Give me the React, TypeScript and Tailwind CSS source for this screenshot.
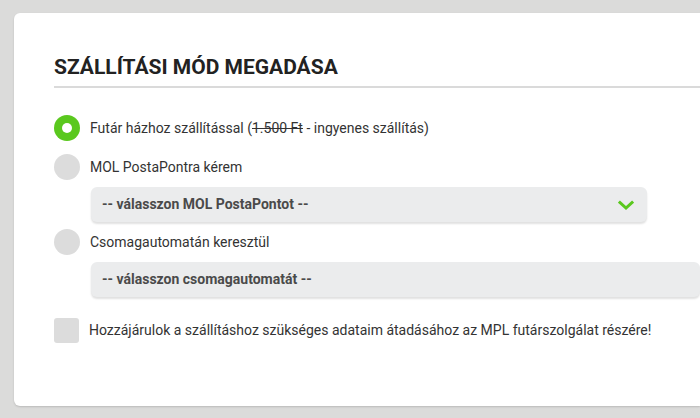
import { useState } from 'react';

const options = [
  { id: 'mol', label: 'MOL PostaPontra kérem', select: '-- válasszon MOL PostaPontot --', check: true },
  { id: 'automata', label: 'Csomagautomatán keresztül', select: '-- válasszon csomagautomatát --' },
];

function Radio({ checked, onClick }: { checked: boolean; onClick: () => void }) {
  return (
    <button
      onClick={onClick}
      className={`h-[26px] w-[26px] shrink-0 rounded-full flex items-center justify-center ${checked ? 'bg-[#5ac81e]' : 'bg-[#dcdcdc]'}`}
    >
      {checked && <span className="h-[10px] w-[10px] rounded-full bg-white" />}
    </button>
  );
}

export default function App() {
  const [selected, setSelected] = useState('futar');
  const [agree, setAgree] = useState(false);

  return (
    <div className="min-h-[418px] bg-[#dbdbda] pt-[13px] pl-[14px] font-['Roboto',sans-serif] text-[#333] overflow-hidden">
      <div className="bg-white rounded-l-[6px] h-[393px] pl-[40px] pt-[40px] shadow-[0_1px_2px_rgba(0,0,0,0.15)]">
        {/* Header */}
        <h1 className="text-[21px] leading-[28px] font-bold text-[#222]">SZÁLLÍTÁSI MÓD MEGADÁSA</h1>
        <div className="mt-[5px] h-[2px] bg-[#dadada]" />

        {/* Options */}
        <div className="mt-[27px] flex items-center gap-[10px]">
          <Radio checked={selected === 'futar'} onClick={() => setSelected('futar')} />
          <span className="text-[14px]">
            Futár házhoz szállítással (<span className="line-through">1.500 Ft</span> - ingyenes szállítás)
          </span>
        </div>

        {options.map((o, i) => (
          <div key={o.id}>
            <div className={`flex items-center gap-[10px] ${i === 0 ? 'mt-[13px]' : 'mt-[7px]'}`}>
              <Radio checked={selected === o.id} onClick={() => setSelected(o.id)} />
              <span className="text-[14px]">{o.label}</span>
            </div>
            <div
              className={`mt-[7px] ml-[37px] h-[35px] bg-[#ebeced] rounded-[6px] shadow-[0_2px_2px_rgba(0,0,0,0.12)] flex items-center justify-between pl-[11px] pr-[13px] ${o.check ? 'w-[556px]' : ''}`}
            >
              <span className="text-[14px] font-bold text-[#4a4a4a]">{o.select}</span>
              {o.check && (
                <svg width="16" height="12" viewBox="0 0 16 12" fill="none">
                  <path d="M2 3.5 L8 9 L14 3.5" stroke="#5ac81e" strokeWidth="3" strokeLinecap="square" />
                </svg>
              )}
            </div>
          </div>
        ))}

        {/* Consent */}
        <div className="mt-[21px] flex items-center gap-[10px]">
          <button
            onClick={() => setAgree(!agree)}
            className="h-[25px] w-[25px] shrink-0 rounded-[3px] bg-[#dcdcdc]"
          />
          <span className="text-[14px]">
            Hozzájárulok a szállításhoz szükséges adataim átadásához az MPL futárszolgálat részére!
          </span>
        </div>
      </div>
    </div>
  );
}
